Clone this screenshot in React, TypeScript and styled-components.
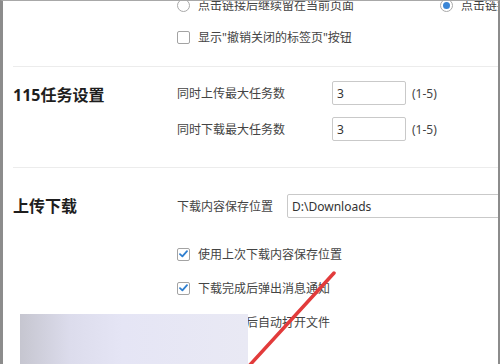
import styled, { createGlobalStyle } from 'styled-components';

const GlobalStyle = createGlobalStyle`
	* { box-sizing: border-box; }
	body {
		margin: 0;
		background: #ffffff;
		font-family: "Noto Sans", "Noto Sans CJK SC", sans-serif;
	}
`;

const Window = styled.div`
	position: relative;
	width: 500px;
	height: 364px;
	overflow: hidden;
	background: #ffffff;
	border-top: 1px solid #a8a8a8;
	border-left: 3px solid #8c8c8c;
	border-right: 2px solid #8c8c8c;
`;

const Page = styled.div`
	margin-top: -12px;
	margin-left: 10px;
`;

const Section = styled.div<{ $pt: number; $pb: number; $line?: boolean }>`
	display: grid;
	grid-template-columns: 164px 1fr;
	padding: ${(p) => p.$pt}px 0 ${(p) => p.$pb}px;
	border-bottom: ${(p) => (p.$line ? '1px solid #ececec' : 'none')};
`;

const Title = styled.div<{ $pt?: number }>`
	padding-top: ${(p) => p.$pt || 0}px;
	font-size: 16px;
	line-height: 24px;
	font-weight: 700;
	color: #1e1e1e;
	white-space: nowrap;
`;

const Column = styled.div<{ $gap: number }>`
	display: flex;
	flex-direction: column;
	gap: ${(p) => p.$gap}px;
	min-width: 0;
`;

const Row = styled.div<{ $h: number }>`
	display: flex;
	align-items: center;
	height: ${(p) => p.$h}px;
	white-space: nowrap;
	font-size: 12px;
	color: #444444;
`;

const Option = styled.label<{ $w?: number }>`
	display: flex;
	align-items: center;
	gap: 8px;
	width: ${(p) => (p.$w ? `${p.$w}px` : 'auto')};
	flex-shrink: 0;
	white-space: nowrap;
	font-size: 12px;
	color: #444444;
`;

const Radio = styled.span<{ $on?: boolean }>`
	position: relative;
	width: 13px;
	height: 13px;
	border-radius: 50%;
	border: 1px solid #a9a9a9;
	background: #ffffff;
	flex-shrink: 0;
	&::after {
		content: '';
		display: ${(p) => (p.$on ? 'block' : 'none')};
		position: absolute;
		left: 2px;
		top: 2px;
		width: 7px;
		height: 7px;
		border-radius: 50%;
		background: #3b86d6;
	}
`;

const Check = styled.span`
	display: flex;
	align-items: center;
	justify-content: center;
	width: 13px;
	height: 13px;
	border: 1px solid #a3a3a3;
	border-radius: 2px;
	background: #ffffff;
	flex-shrink: 0;
`;

const FieldLabel = styled.span<{ $w?: number }>`
	width: ${(p) => (p.$w ? `${p.$w}px` : 'auto')};
	flex-shrink: 0;
`;

const Input = styled.div<{ $w: number }>`
	display: flex;
	align-items: center;
	width: ${(p) => p.$w}px;
	height: 24px;
	padding: 0 4px;
	border: 1px solid #c9c9c9;
	border-radius: 2px;
	font-size: 12px;
	color: #333333;
	flex-shrink: 0;
`;

const Hint = styled.span`
	margin-left: 6px;
	font-size: 12px;
	color: #444444;
`;

const Smudge = styled.div`
	position: absolute;
	left: 17px;
	top: 313px;
	width: 228px;
	height: 60px;
	background: linear-gradient(90deg, #c6c6d0 0%, #dcdcec 22%, #e5e5f5 45%, #e9e9f4 100%);
`;

const Stroke = styled.svg`
	position: absolute;
	left: 0;
	top: 0;
	pointer-events: none;
`;

const Tick = () => (
	<Check>
		<svg width="9" height="8" viewBox="0 0 9 8">
			<path d="M1 4.2 L3.4 6.4 L8 1.2" fill="none" stroke="#2f7fd0" strokeWidth="1.8" strokeLinecap="round" strokeLinejoin="round" />
		</svg>
	</Check>
);

const App = () => {
	return (
		<>
			<GlobalStyle />
			<Window>
				<Page>
					<Section $pt={0} $pb={13} $line>
						<div />
						<Column $gap={0}>
							<Row $h={32}>
								<Option $w={263}>
									<Radio />
									点击链接后继续留在当前页面
								</Option>
								<Option>
									<Radio $on />
									点击链接后跳转到新页面
								</Option>
							</Row>
							<Row $h={32}>
								<Option>
									<Check />
									显示"撤销关闭的标签页"按钮
								</Option>
							</Row>
						</Column>
					</Section>

					<Section $pt={14} $pb={26} $line>
						<Title $pt={2}>115任务设置</Title>
						<Column $gap={12}>
							<Row $h={24}>
								<FieldLabel $w={155}>同时上传最大任务数</FieldLabel>
								<Input $w={74}>3</Input>
								<Hint>(1-5)</Hint>
							</Row>
							<Row $h={24}>
								<FieldLabel $w={155}>同时下载最大任务数</FieldLabel>
								<Input $w={74}>3</Input>
								<Hint>(1-5)</Hint>
							</Row>
						</Column>
					</Section>

					<Section $pt={26} $pb={20}>
						<Title>上传下载</Title>
						<Column $gap={14}>
							<Row $h={24}>
								<FieldLabel $w={110}>下载内容保存位置</FieldLabel>
								<Input $w={240}>D:\Downloads</Input>
							</Row>
							<Row $h={20} style={{ marginTop: 12 }}>
								<Option>
									<Tick />
									使用上次下载内容保存位置
								</Option>
							</Row>
							<Row $h={20}>
								<Option>
									<Tick />
									下载完成后弹出消息通知
								</Option>
							</Row>
							<Row $h={20}>
								<Option>
									<Check />
									下载完成后自动打开文件
								</Option>
							</Row>
						</Column>
					</Section>
				</Page>
				<Smudge />
				<Stroke width="500" height="364" viewBox="0 0 500 364">
					<line x1="331" y1="272" x2="245" y2="366" stroke="#e23b3b" strokeWidth="3.5" strokeLinecap="round" />
				</Stroke>
			</Window>
		</>
	);
};

export default App;
